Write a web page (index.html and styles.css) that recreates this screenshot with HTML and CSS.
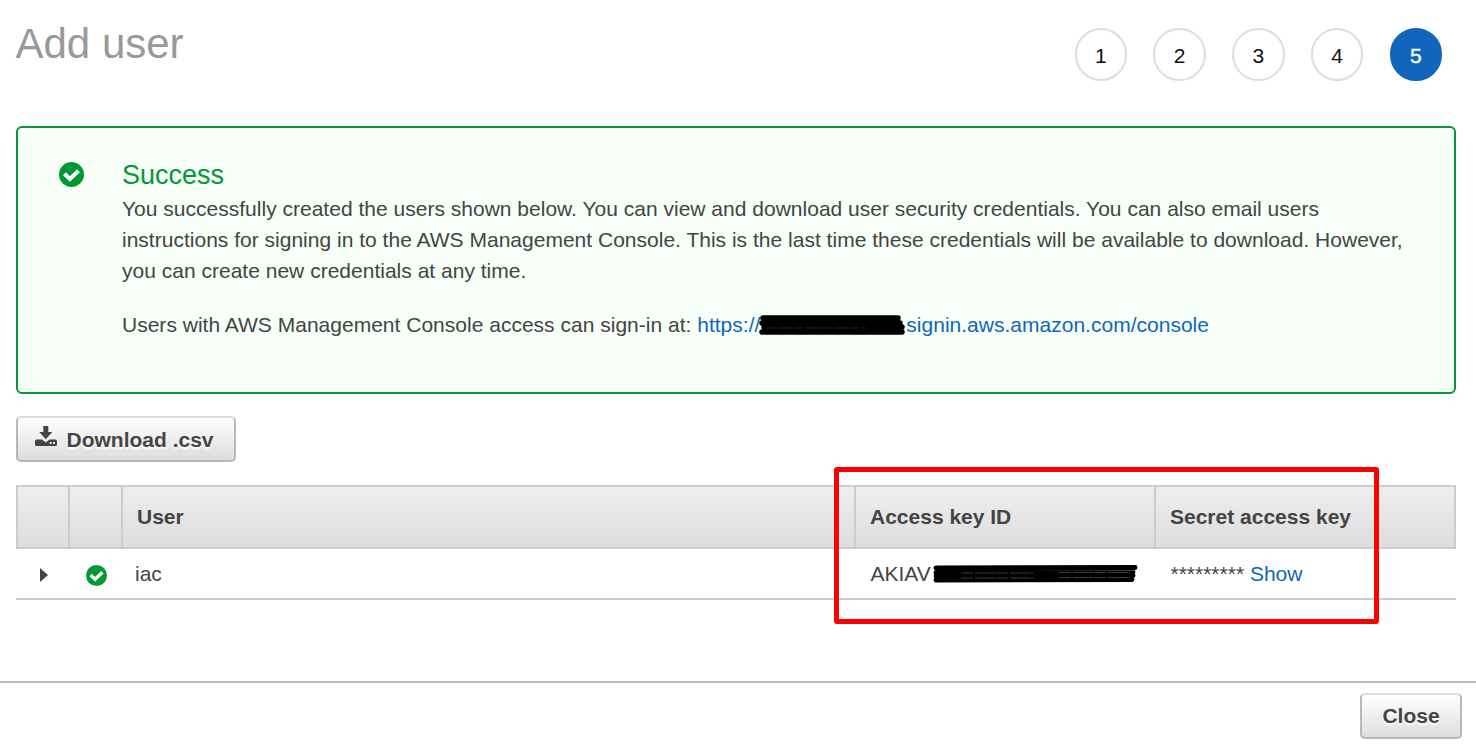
FILE: index.html
```html
<!DOCTYPE html>
<html lang="en">
<head>
<meta charset="utf-8">
<title>Add user</title>
<link rel="stylesheet" href="styles.css">
</head>
<body>
<svg class="defs" width="0" height="0">
  <symbol id="check" viewBox="0 0 25 25">
    <circle cx="12.5" cy="12.5" r="12.5" fill="#093"/>
    <path d="M5.4 11.8 10.9 17 19.6 8.700" fill="none" stroke="#fff" stroke-width="4"/>
  </symbol>
</svg>
<div class="page">
  <header class="header">
    <h1 class="title">Add user</h1>
    <ol class="steps">
      <li class="step">1</li>
      <li class="step">2</li>
      <li class="step">3</li>
      <li class="step">4</li>
      <li class="step active">5</li>
    </ol>
  </header>
  <main class="main">
    <section class="alert">
      <svg class="alert-icon"><use href="#check"/></svg>
      <div class="alert-body">
        <h2 class="alert-title">Success</h2>
        <p class="alert-text">You successfully created the users shown below. You can view and download user security credentials. You can also email users<br>instructions for signing in to the AWS Management Console. This is the last time these credentials will be available to download. However,<br>you can create new credentials at any time.</p>
        <p class="alert-text signin">Users with AWS Management Console access can sign-in at: <a class="link">https://</a><svg class="redact-url" viewBox="0 0 147 20"><path d="M4 3H139M3 8H141M5 12H143M3 17H143" stroke="#000" stroke-width="5.5" stroke-linecap="round"/><path d="M7 13H107" stroke="#35382f" stroke-width=".7" stroke-dasharray="9 3 14 2"/></svg><a class="link">signin.aws.amazon.com/console</a></p>
      </div>
    </section>
    <button class="btn download">
      <svg class="download-icon" viewBox="0 0 22 21" fill="#444"><path d="M8.3 0H13.3V6H17.3L10.8 13.2 4.2 6H8.3Z"/><path d="M1.6 13.5H7L10.8 16.5 14.6 13.5H20.3Q22 13.5 22 15.2V18.4Q22 20.1 20.3 20.1H1.6Q0 20.1 0 18.4V15.2Q0 13.5 1.6 13.5Z"/><path d="M14.7 16H16.6V18H14.7ZM18 16H19.9V18H18Z" fill="#eee"/></svg>
      <span class="download-label">Download .csv</span>
    </button>
    <div class="table">
      <div class="row head">
        <div class="cell"></div>
        <div class="cell"></div>
        <div class="cell">User</div>
        <div class="cell">Access key ID</div>
        <div class="cell">Secret access key</div>
      </div>
      <div class="row item">
        <div class="cell"><svg class="arrow" viewBox="0 0 8 14"><path d="M0 0 8 7 0 14Z" fill="#444"/></svg></div>
        <div class="cell"><svg class="row-icon"><use href="#check"/></svg></div>
        <div class="cell name">iac</div>
        <div class="cell key">AKIAV<svg class="redact-key" viewBox="0 0 206 20"><path d="M3 4 202 3.500M3 8.500 200 8M3 12 200 11.500M3 16 199 15.500" stroke="#000" stroke-width="5" stroke-linecap="round"/><path d="M28 9H101M28 14H101M126 8.500H197M126 13.500H197" stroke="#555" stroke-width=".7" stroke-dasharray="12 2 20 1"/></svg></div>
        <div class="cell">*********&nbsp;<a class="link">Show</a></div>
      </div>
      <div class="highlight"></div>
    </div>
  </main>
  <footer class="footer"><button class="btn close">Close</button></footer>
</div>
</body>
</html>
```
FILE: styles.css
```css
* { box-sizing: border-box; }
body {
  margin: 0;
  background: #fff;
  color: #444;
  font: 21px/31px "Liberation Sans", Arial, sans-serif;
}
.defs { display: block; }
.page { display: flex; flex-direction: column; height: 747px; overflow: hidden; }
.header { display: flex; justify-content: space-between; height: 126px; padding: 20px 34px 0 15.5px; }
.title { margin: 0; color: #999; font-size: 42px; font-weight: 400; line-height: 48px; }
.steps { display: flex; gap: 26.25px; margin: 8px 0 0; padding: 0; list-style: none; }
.step {
  width: 52.5px;
  height: 52.5px;
  border: 2px solid #ddd;
  border-radius: 50%;
  color: #111;
  line-height: 51px;
  text-align: center;
}
.step.active { border-color: #1166bb; background: #1166bb; color: #fff; -webkit-text-stroke: .4px #fff; }
.main { flex: 1; padding: 0 20px 0 16px; }
.alert {
  display: flex;
  height: 268px;
  padding: 32px 30px 0 41px;
  border: 2px solid #093;
  border-radius: 6px;
  background: #f7fff8;
}
.alert-icon { flex: none; width: 25px; height: 25px; margin: 2px 38px 0 0; }
.alert-body { white-space: nowrap; }
.alert-title { margin: 0 0 2px; color: #093; font-size: 27px; font-weight: 400; line-height: 31px; }
.alert-text { margin: 0; letter-spacing: .01px; }
.signin { display: flex; margin-top: 23px; white-space: pre; }
.link { color: #1166bb; }
.redact-url { width: 147px; height: 20px; margin: 6px 0 0 -1px; }
.btn {
  display: flex;
  align-items: center;
  height: 46px;
  padding: 0;
  border: 2px solid #b8b8b8;
  border-top-color: #ddd;
  border-radius: 5px;
  background: linear-gradient(#fff, #ddd);
  color: #444;
  font: bold 21px/24px "Liberation Sans", Arial, sans-serif;
  text-shadow: 0 2px 2px #fff;
}
.download { width: 220px; margin-top: 22px; padding-left: 16.5px; }
.download-label { padding-top: 2px; }
.download-icon { width: 22px; height: 21px; margin: -5px 10px 0 0; }
.table { position: relative; margin-top: 23px; }
.row { display: grid; grid-template-columns: 54px 53px 733px 300px 300px; }
.cell { display: flex; align-items: center; padding-left: 14.5px; white-space: nowrap; }
.head { height: 64px; border: 2px solid #ccc; background: linear-gradient(#eee, #ddd); font-weight: 700; grid-template-columns: 50px 53px 733px 300px 1fr; }
.head .cell { padding: 0 0 2px 14px; }
.head .cell + .cell { border-left: 2px solid #ccc; }
.item { height: 51px; border-bottom: 2px solid #ccc; }
.arrow { width: 8px; height: 14px; margin: 2px 0 0 9.5px; }
.row-icon { width: 21px; height: 21px; margin: 4px 0 0 1.5px; }
.name { padding-left: 12px; }
.redact-key { width: 206px; height: 20px; margin-left: 2px; }
.highlight {
  position: absolute;
  left: 818px;
  top: -18px;
  width: 545px;
  height: 157px;
  border: 5px solid #f00;
  border-radius: 3px;
}
.footer {
  display: flex;
  justify-content: flex-end;
  height: 66px;
  padding: 10px 14px 0 0;
  border-top: 2px solid #bbb;
}
.close { width: 102px; justify-content: center; }
```
